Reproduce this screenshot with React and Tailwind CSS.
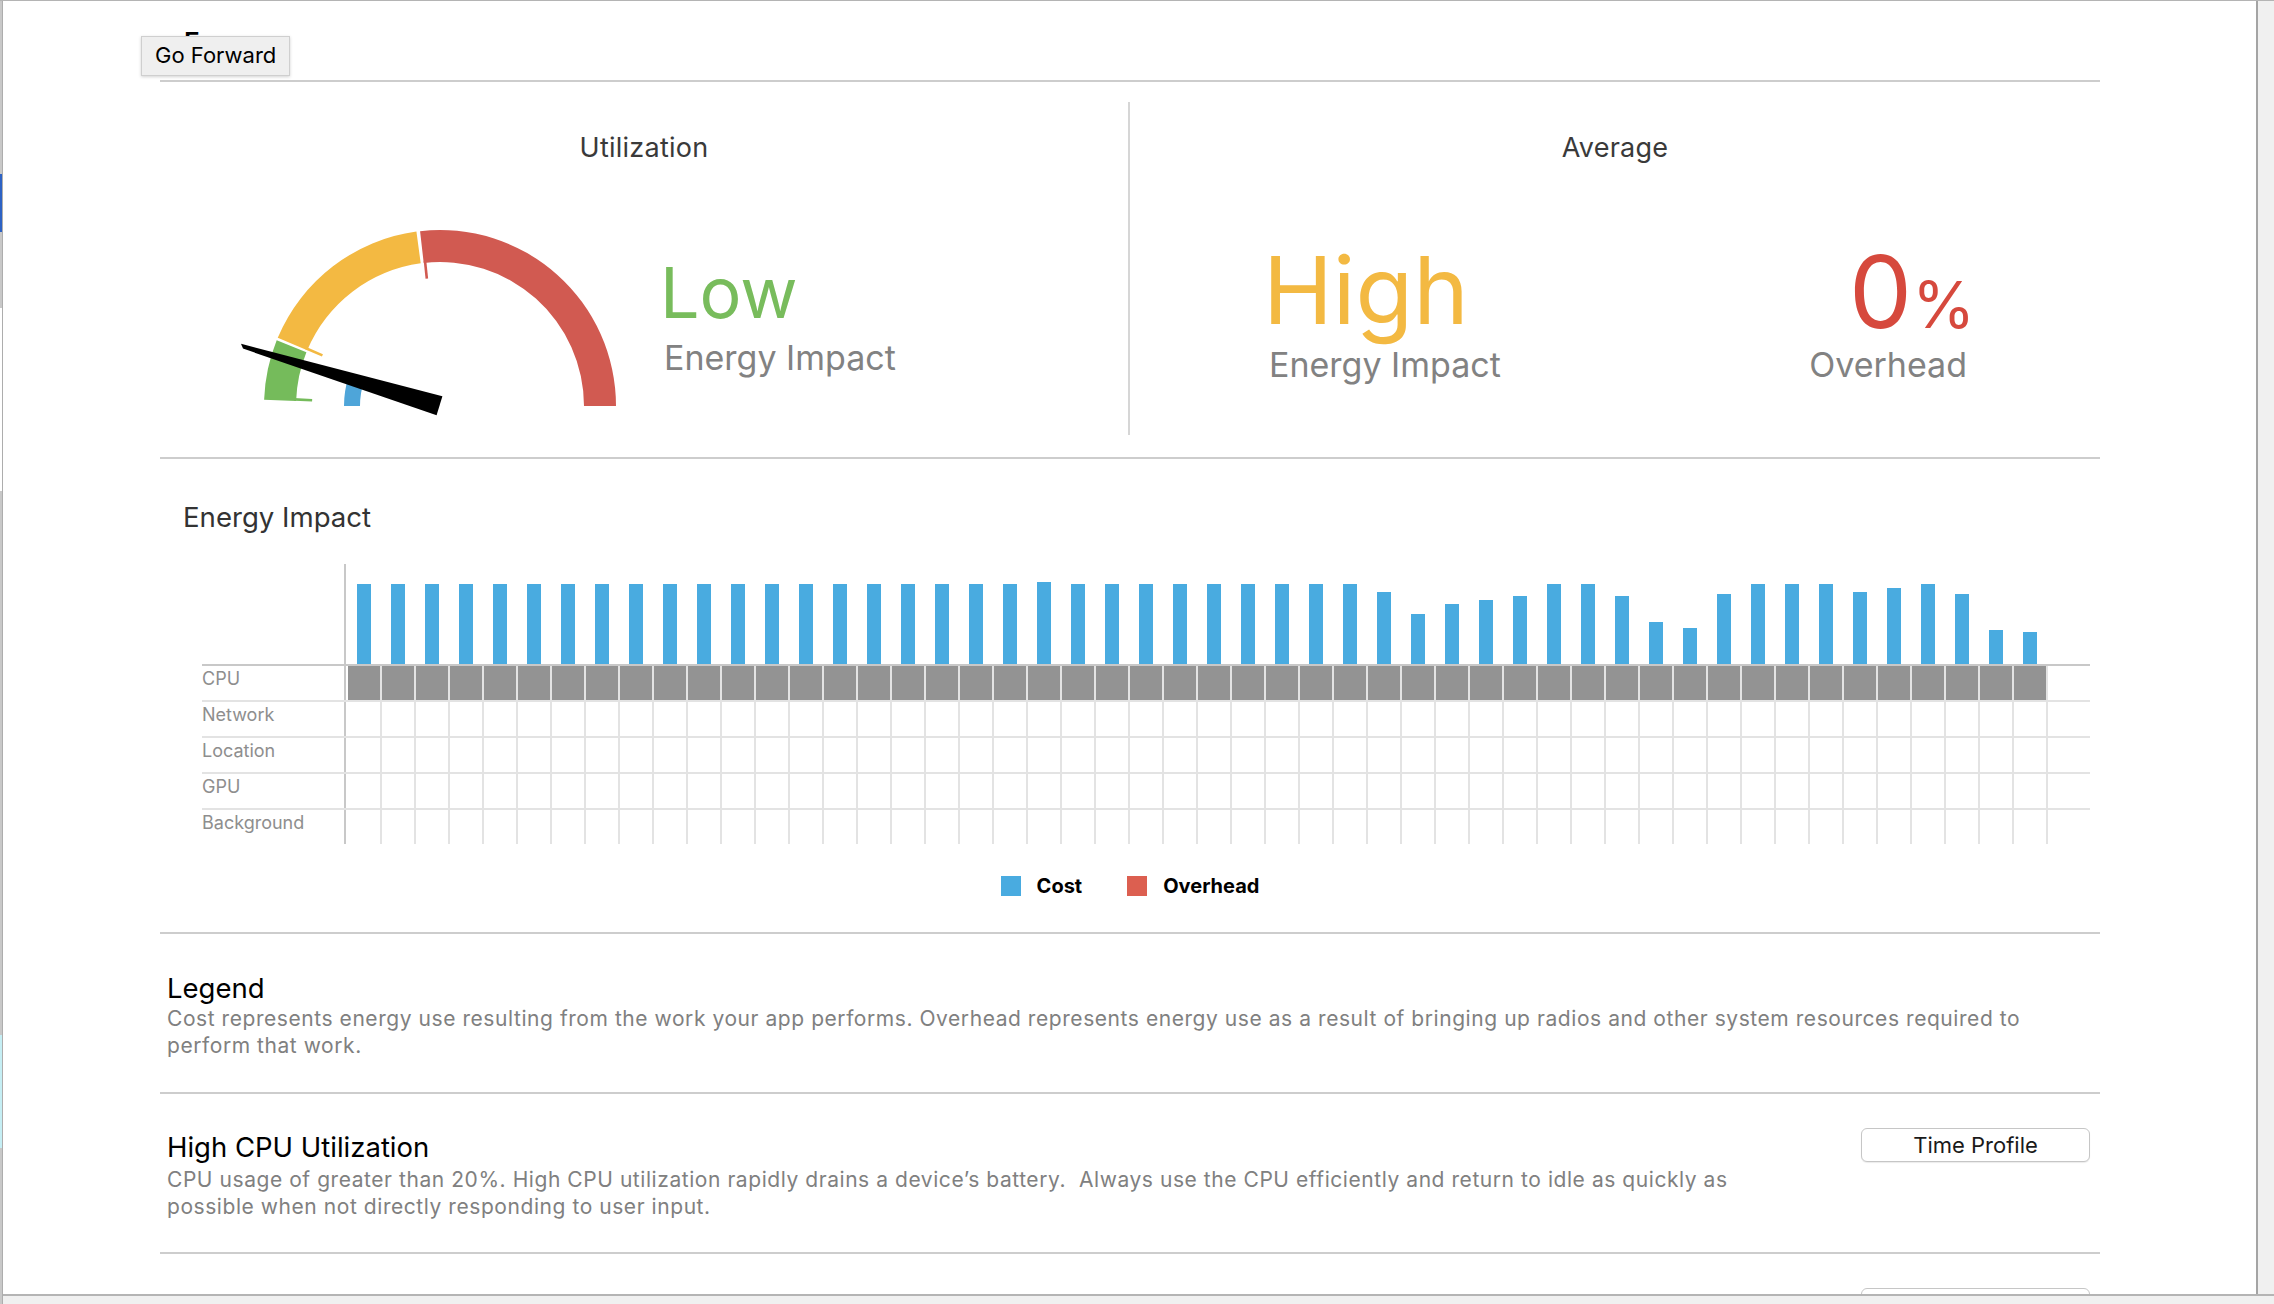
import React, { Fragment } from "react";

const bars = [
  80, 80, 80, 80, 80, 80, 80, 80, 80, 80, 80, 80, 80, 80, 80, 80, 80, 80, 80, 80,
  82, 80, 80, 80, 80, 80, 80, 80, 80, 80, 72, 50, 60, 64, 68, 80, 80, 68, 42, 36,
  70, 80, 80, 80, 72, 76, 80, 70, 34, 32,
];
const cols = Array.from({ length: 50 }, (_, i) => i);
const labels = ["CPU", "Network", "Location", "GPU", "Background"];

const CX = 210;
const CY = 186;
function pt(r, deg) {
  const a = (deg * Math.PI) / 180;
  return [CX - r * Math.cos(a), CY - r * Math.sin(a)];
}
function sector(r1, r2, a1, a2) {
  const [x1, y1] = pt(r2, a1);
  const [x2, y2] = pt(r2, a2);
  const [x3, y3] = pt(r1, a2);
  const [x4, y4] = pt(r1, a1);
  const large = a2 - a1 > 180 ? 1 : 0;
  return `M${x1} ${y1} A${r2} ${r2} 0 ${large} 1 ${x2} ${y2} L${x3} ${y3} A${r1} ${r1} 0 ${large} 0 ${x4} ${y4} Z`;
}
function Tick({ a, color }) {
  const [x1, y1] = pt(128, a);
  const [x2, y2] = pt(146, a);
  return <line x1={x1} y1={y1} x2={x2} y2={y2} stroke={color} strokeWidth="2.6" />;
}

function Gauge() {
  return (
    <svg width="400" height="200" viewBox="0 0 400 200" className="ml-[70px] mt-[56px] shrink-0">
      <path d={sector(144, 176, 2, 21.9)} fill="#75bb5b" />
      <Tick a={2.6} color="#75bb5b" />
      <path d={sector(144, 176, 22.8, 82.3)} fill="#f3b942" />
      <Tick a={23.3} color="#f3b942" />
      <path d={sector(144, 176, 83.5, 180)} fill="#d15a51" />
      <Tick a={84.1} color="#d15a51" />
      <path d={sector(80, 96, 0, 18)} fill="#4ea5d9" />
      <polygon points="212.4,176.2 11,123.8 13,128.6 206.6,195.3" fill="#000" />
    </svg>
  );
}

function Line() {
  return <div className="h-[2px] bg-[#cdcdcd]" />;
}

export default function App() {
  return (
    <div className="w-[2274px] h-[1304px] bg-[#f0f0f0] border-t border-[#b4b4b4] flex overflow-hidden font-['Inter','Liberation_Sans',sans-serif]">
      <div className="w-[3px] shrink-0 flex flex-col border-r border-[#adadad]">
        <div className="h-[173px] bg-[#c8c8c8]" />
        <div className="h-[58px] bg-[#2d62c4]" />
        <div className="h-[76px] bg-[#c8c8c8]" />
        <div className="h-[183px] bg-white" />
        <div className="h-[544px] bg-[#c8c8c8]" />
        <div className="h-[113px] bg-[#c5eef4]" />
        <div className="flex-1 bg-[#c8c8c8]" />
      </div>
      <div className="flex-1 flex flex-col">
        <div className="flex h-[1293px]">
          <main className="relative w-[2253px] h-full bg-white overflow-hidden">
            <div className="ml-[157px] w-[1940px] flex flex-col">
              {/* header */}
              <div className="h-[79px] pt-[25px] pl-[24px]">
                <div className="text-[26px] leading-[32px] font-semibold text-black">Energy</div>
              </div>
              <Line />

              {/* top summary */}
              <div className="flex h-[375px] pt-[20px] pb-[22px]">
                <div className="w-[968px] flex flex-col">
                  <div className="mt-[30px] text-center text-[27px] leading-[32px] tracking-[0.25px] text-[#3a3a3a]">Utilization</div>
                  <div className="flex items-start">
                    <Gauge />
                    <div className="ml-[30px] mt-[94px] flex flex-col">
                      <div className="text-[70px] leading-[70px] text-[#78bc5c]">Low</div>
                      <div className="mt-[10px] ml-[4px] text-[34px] leading-[40px] text-[#828282]">Energy Impact</div>
                    </div>
                  </div>
                </div>
                <div className="w-[2px] bg-[#d6d6d6]" />
                <div className="flex-1 flex flex-col">
                  <div className="mt-[30px] text-center text-[27px] leading-[32px] tracking-[0.25px] text-[#3a3a3a]">Average</div>
                  <div className="flex items-start justify-between pl-[133px] pr-[133px]">
                    <div className="mt-[79px] flex flex-col">
                      <div className="text-[94px] leading-[94px] text-[#f3b942]">High</div>
                      <div className="mt-[8px] ml-[6px] text-[34px] leading-[40px] text-[#828282]">Energy Impact</div>
                    </div>
                    <div className="mt-[78px] flex flex-col items-end">
                      <div className="flex items-baseline mr-[-8px] text-[#d6493d]">
                        <span className="text-[100px] leading-[100px]">0</span>
                        <span className="text-[64px] leading-[64px]">%</span>
                      </div>
                      <div className="mt-[3px] text-[34px] leading-[40px] text-[#828282]">Overhead</div>
                    </div>
                  </div>
                </div>
              </div>
              <Line />

              {/* chart */}
              <div className="h-[473px] pt-[42px] flex flex-col">
                <div className="pl-[23px] text-[27.6px] leading-[32px] text-[#333333]">Energy Impact</div>
                <div className="mt-[31px] ml-[42px] w-[1888px] flex flex-col">
                  <div className="flex h-[100px]">
                    <div className="w-[142px]" />
                    <div className="w-[2px] bg-[#c8c8c8]" />
                    <div className="flex items-end">
                      {bars.map((h, i) => (
                        <div key={i} className="w-[34px] h-full flex items-end">
                          <div className="ml-[11px] w-[14px] bg-[#49abe0]" style={{ height: h }} />
                        </div>
                      ))}
                    </div>
                  </div>
                  <div className="h-[2px] bg-[#c8c8c8]" />
                  {labels.map((l, r) => (
                    <Fragment key={l}>
                      {r > 0 && <div className="h-[2px] bg-[#e3e3e3]" />}
                      <div className="flex h-[34px]">
                        <div className="w-[142px] text-[18px] leading-[26px] text-[#8e8e8e]">{l}</div>
                        <div className="w-[2px] bg-[#c8c8c8]" />
                        {cols.map((i) => (
                          <div key={i} className="flex w-[34px]">
                            <div className={i === 0 ? "w-[2px]" : "w-[2px] bg-[#e3e3e3]"} />
                            <div className={r === 0 ? "w-[32px] bg-[#939393]" : "w-[32px]"} />
                          </div>
                        ))}
                        <div className="w-[2px] bg-[#e3e3e3]" />
                      </div>
                    </Fragment>
                  ))}
                </div>
                <div className="mt-[32px] h-[20px] flex items-center justify-center">
                  <div className="w-[20px] h-[20px] bg-[#49abe0]" />
                  <span className="ml-[16px] text-[20px] leading-[20px] font-bold text-black">Cost</span>
                  <div className="ml-[45px] w-[20px] h-[20px] bg-[#dc5f50]" />
                  <span className="ml-[16px] text-[20px] leading-[20px] font-bold text-black">Overhead</span>
                </div>
              </div>
              <Line />

              {/* legend */}
              <div className="h-[158px] pt-[38px] pl-[7px]">
                <div className="text-[27.5px] leading-[32px] text-black">Legend</div>
                <div className="mt-[1px] text-[21px] leading-[27px] tracking-[0.56px] text-[#808080] whitespace-nowrap">
                  Cost represents energy use resulting from the work your app performs. Overhead represents energy use as a result of bringing up radios and other system resources required to
                  <br />
                  perform that work.
                </div>
              </div>
              <Line />

              {/* high cpu */}
              <div className="h-[158px] flex items-start justify-between">
                <div className="pt-[37px] pl-[7px]">
                  <div className="text-[27.5px] leading-[32px] text-black">High CPU Utilization</div>
                  <div className="mt-[3px] text-[21px] leading-[27px] tracking-[0.56px] text-[#808080] whitespace-nowrap">
                    CPU usage of greater than 20%. High CPU utilization rapidly drains a device’s battery.{"\u00a0 "}Always use the CPU efficiently and return to idle as quickly as
                    <br />
                    possible when not directly responding to user input.
                  </div>
                </div>
                <button className="mt-[34px] mr-[10px] w-[229px] h-[34px] rounded-[6px] border border-[#c6c6c6] bg-white shadow-[0_1px_1px_rgba(0,0,0,0.08)] text-[22px] leading-[32px] text-[#1a1a1a]">
                  Time Profile
                </button>
              </div>
              <Line />

              <div className="h-[158px] flex items-start justify-end">
                <div className="mt-[34px] mr-[10px] w-[229px] h-[34px] rounded-[6px] border border-[#c6c6c6] bg-white" />
              </div>
            </div>

            {/* tooltip */}
            <div className="absolute left-[138px] top-[35px] border border-[#cfcfcf] bg-[#efefef] px-[13px] py-[6px] shadow-[0_1px_3px_rgba(0,0,0,0.18)]">
              <span className="text-[22px] leading-[24px] text-black whitespace-nowrap">Go Forward</span>
            </div>
          </main>
          <div className="w-[2px] bg-[#a4a4a4]" />
          <div className="flex-1" />
        </div>
        <div className="h-[2px] bg-[#b4b4b4]" />
      </div>
    </div>
  );
}
